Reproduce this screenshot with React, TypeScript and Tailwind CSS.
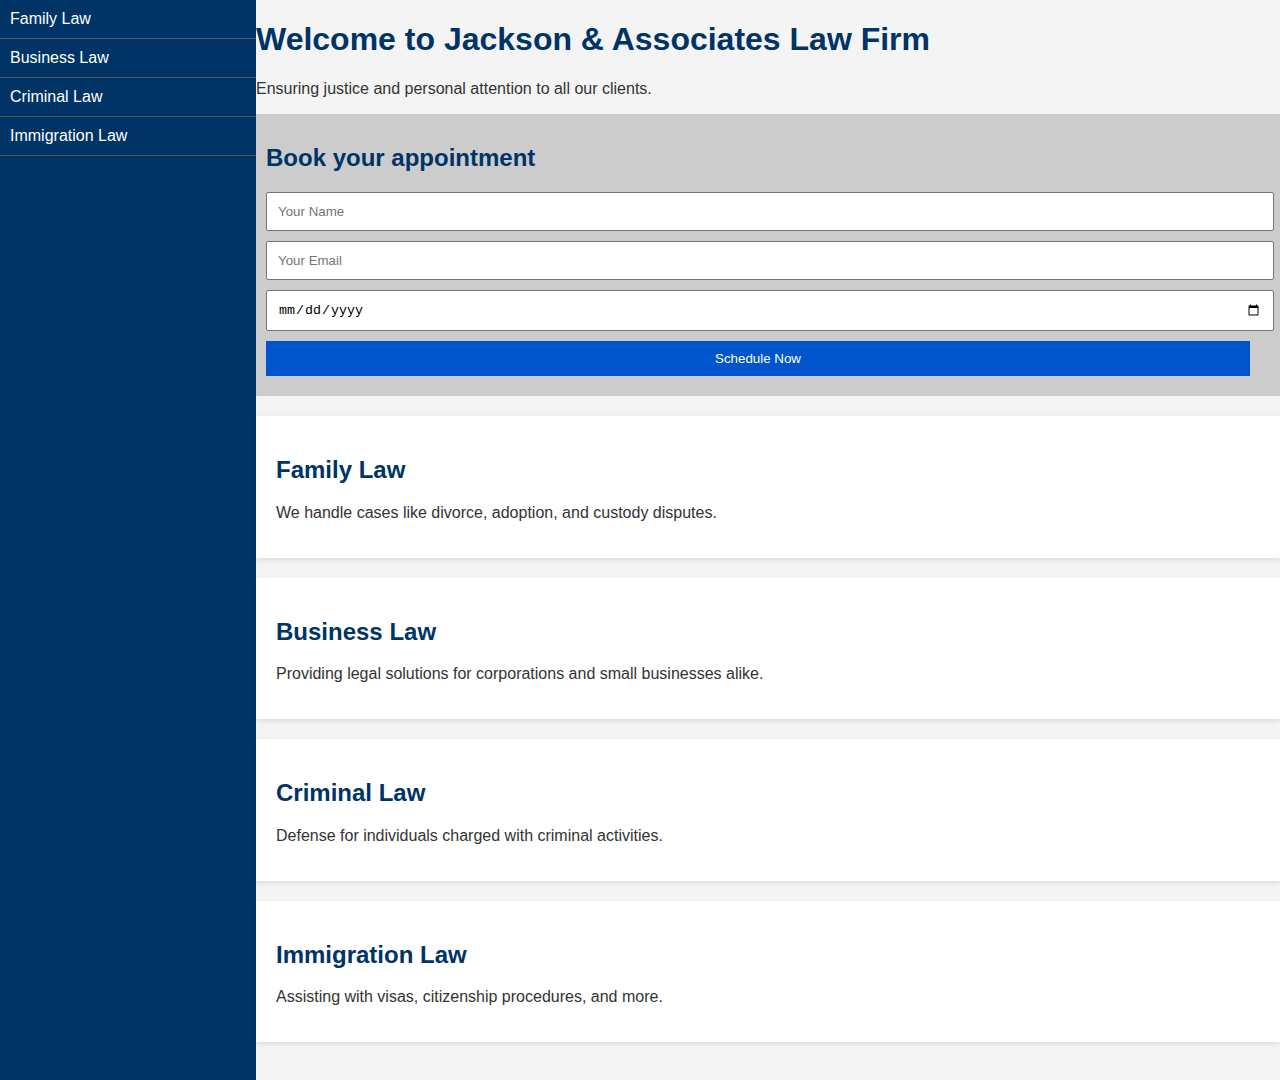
const services = [
  { title: "Family Law", text: "We handle cases like divorce, adoption, and custody disputes." },
  { title: "Business Law", text: "Providing legal solutions for corporations and small businesses alike." },
  { title: "Criminal Law", text: "Defense for individuals charged with criminal activities." },
  { title: "Immigration Law", text: "Assisting with visas, citizenship procedures, and more." },
];

export default function App() {
  return (
    <div className="flex min-h-screen bg-[#f4f4f4] font-['Liberation_Sans',Arial,sans-serif] text-[#333]">
      <nav className="w-[256px] shrink-0 bg-[#003366]">
        <ul>
          {services.map((s) => (
            <li key={s.title} className="border-b border-[#555] px-[10px] py-[10px] text-base leading-[18px] text-white">
              {s.title}
            </li>
          ))}
        </ul>
      </nav>
      <main className="min-w-0 flex-1">
        <h1 className="mt-[21.44px] text-[32px] leading-[36.8px] font-bold text-[#003366]">
          Welcome to Jackson &amp; Associates Law Firm
        </h1>
        <p className="mt-[21.44px] mb-4 text-base leading-[18.4px]">
          Ensuring justice and personal attention to all our clients.
        </p>

        <section className="bg-[#cccccc] p-[10px]">
          <h2 className="mt-[19.92px] mb-[20.92px] text-2xl leading-[27.6px] font-bold text-[#003366]">
            Book your appointment
          </h2>
          <form className="flex flex-col gap-[10px] pb-[10px]">
            <input
              type="text"
              placeholder="Your Name"
              className="h-[39px] w-[1008px] rounded-[2px] border border-[#767676] bg-white px-[11px] text-[13.33px] placeholder:text-[#757575]"
            />
            <input
              type="email"
              placeholder="Your Email"
              className="h-[39px] w-[1008px] rounded-[2px] border border-[#767676] bg-white px-[11px] text-[13.33px] placeholder:text-[#757575]"
            />
            <input
              type="date"
              className="h-[41px] w-[1008px] rounded-[2px] border border-[#767676] bg-white px-[11px] font-['Liberation_Mono',monospace] text-[13.33px] text-black"
            />
            <button
              type="button"
              className="h-[35px] w-[984px] bg-[#0055cc] text-[13.33px] text-white"
            >
              Schedule Now
            </button>
          </form>
        </section>

        <div className="mt-5 flex flex-col gap-5 pb-5">
          {services.map((s) => (
            <div key={s.title} className="bg-white p-5 shadow-[0_2px_5px_rgba(0,0,0,0.1)]">
              <h2 className="mt-[19.92px] text-2xl leading-[27.6px] font-bold text-[#003366]">{s.title}</h2>
              <p className="mt-[19.92px] mb-[15.7px] text-base leading-[18.4px]">{s.text}</p>
            </div>
          ))}
        </div>
      </main>
    </div>
  );
}
